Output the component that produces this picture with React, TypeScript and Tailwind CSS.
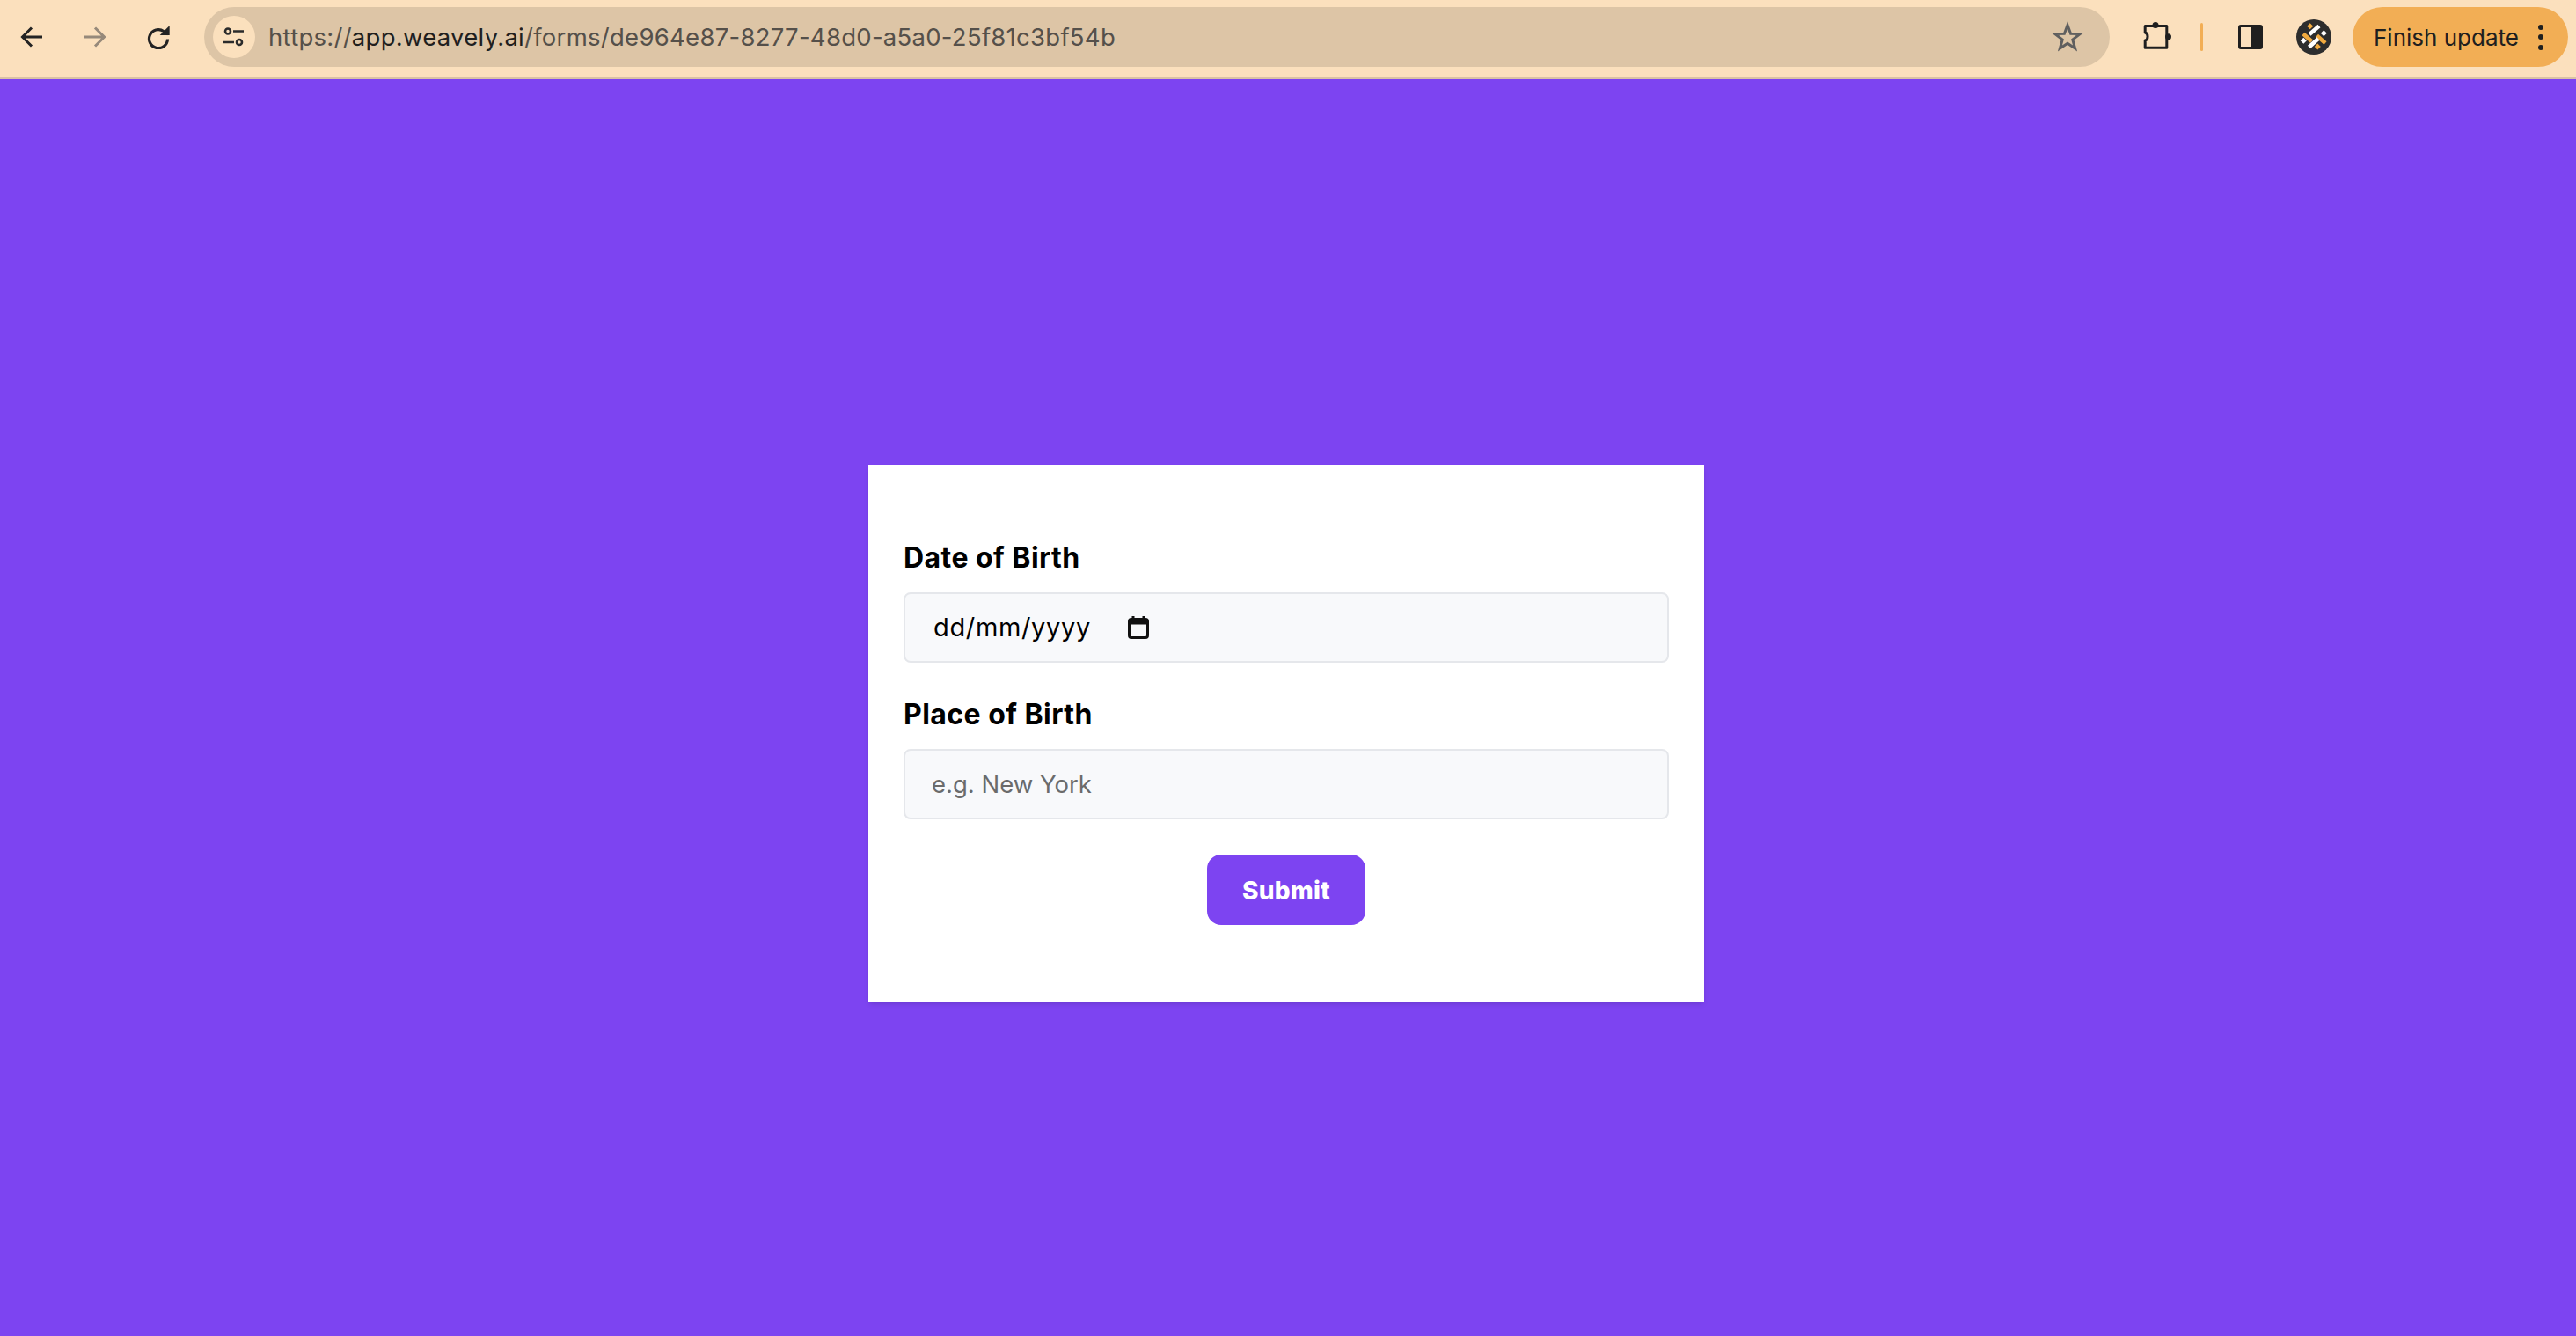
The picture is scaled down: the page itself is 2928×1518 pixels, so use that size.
import React from 'react';

const BrowserBar: React.FC = () => (
  <header className="flex h-[90px] items-center border-b-2 border-[#d9c2a5] bg-[#fbe0bd] pb-[4px] pr-[9px] text-[#1f1f1f]">
    <button className="flex h-[68px] w-[72px] items-center justify-center">
      <svg width="26" height="26" viewBox="0 0 26 26" fill="none" stroke="#232323" strokeWidth="3">
        <path d="M25 13H3M13 2.5 2.5 13 13 23.5" />
      </svg>
    </button>
    <button className="flex h-[68px] w-[72px] items-center justify-center">
      <svg width="26" height="26" viewBox="0 0 26 26" fill="none" stroke="#96897a" strokeWidth="3">
        <path d="M1 13h22M13 2.5 23.5 13 13 23.5" />
      </svg>
    </button>
    <button className="flex h-[68px] w-[72px] items-center justify-center">
      <svg width="28" height="28" viewBox="0 0 28 28" fill="none">
        <path d="M24.5 16.5A10.5 10.5 0 1 1 20 7.5L25 11" stroke="#232323" strokeWidth="3.2" />
        <path d="M26.7 1v11H15.7z" fill="#232323" />
      </svg>
    </button>
    <div className="ml-[16px] flex h-[68px] w-[2166px] items-center rounded-full bg-[#ddc5a6] pl-[10px] pr-[30px]">
      <div className="flex h-[48px] w-[48px] items-center justify-center rounded-full bg-[#fbe0bd]">
        <svg width="26" height="24" viewBox="0 0 26 24" fill="none" stroke="#2b2b2b" strokeWidth="2.6">
          <circle cx="6" cy="5.5" r="3" />
          <path d="M12 5.5h12M1 18h12" />
          <circle cx="19" cy="18" r="3" />
        </svg>
      </div>
      <div className="ml-[15px] flex-1 pt-[1px] font-['Inter',sans-serif] text-[27.5px] leading-none tracking-[0.27px] text-[#55504a]">
        https://<span className="text-[#1f1f1f]">app.weavely.ai</span>/forms/de964e87-8277-48d0-a5a0-25f81c3bf54b
      </div>
      <svg width="36" height="36" viewBox="0 0 36 36" fill="none" stroke="#5f5f5f" strokeWidth="3" strokeLinejoin="miter">
        <path d="M18 4.5 21.6 14.2 32 14.6 23.8 21 26.6 31 18 25.3 9.4 31 12.2 21 4 14.6 14.4 14.2Z" />
      </svg>
    </div>
    <button className="ml-[20px] flex h-[68px] w-[68px] items-center justify-center">
      <svg width="34" height="34" viewBox="0 0 34 34" fill="none">
        <path d="M3.2 4.5H27.8V29.2H3.2V21C7 20 7 13 3.2 12Z" stroke="#1f1f1f" strokeWidth="3" strokeLinejoin="round" />
        <circle cx="15" cy="3.5" r="3.5" fill="#1f1f1f" />
        <circle cx="29.5" cy="16.7" r="3.5" fill="#1f1f1f" />
      </svg>
    </button>
    <div className="ml-[15px] h-[32px] w-[3px] rounded-full bg-[#f2ae55]" />
    <button className="ml-[22px] flex h-[68px] w-[64px] items-center justify-center">
      <div className="flex h-[28px] w-[28px] overflow-hidden rounded-[3px] border-[3px] border-[#1f1f1f]">
        <div className="flex-1 bg-[#fbe0bd]" />
        <div className="w-[10px] bg-[#1f1f1f]" />
      </div>
    </button>
    <div className="ml-[20px] flex h-[68px] w-[40px] items-center justify-center">
      <svg width="40" height="40" viewBox="0 0 40 40">
        <circle cx="20" cy="20" r="20" fill="#2d2d2d" />
        <g strokeWidth="4.5">
          <path d="M8 16.5 17.5 25" stroke="#f2ab3f" />
          <path d="M23.5 18.5 33 27" stroke="#f2ab3f" />
          <path d="M15 17 26 7.5" stroke="#ffffff" />
          <path d="M14.5 31.5 25 22" stroke="#ffffff" />
        </g>
        <rect x="13.2" y="5.2" width="5" height="5" transform="rotate(45 15.7 7.7)" fill="#f2ab3f" />
        <rect x="21.8" y="28.5" width="5" height="5" transform="rotate(45 24.3 31)" fill="#f2ab3f" />
        <rect x="28.8" y="13.2" width="5" height="5" transform="rotate(45 31.3 15.7)" fill="#ffffff" />
        <rect x="5.8" y="21.8" width="5" height="5" transform="rotate(45 8.3 24.3)" fill="#ffffff" />
      </svg>
    </div>
    <button className="ml-[24px] flex h-[68px] w-[245px] items-center rounded-full bg-[#f2ae55] pl-[24px]">
      <span className="pt-[2px] font-['Inter',sans-serif] text-[26px] leading-none text-[#1f1f1f]">Finish update</span>
      <span className="ml-[22px] flex flex-col gap-[5.5px]">
        <span className="h-[6px] w-[6px] rounded-full bg-[#1f1f1f]" />
        <span className="h-[6px] w-[6px] rounded-full bg-[#1f1f1f]" />
        <span className="h-[6px] w-[6px] rounded-full bg-[#1f1f1f]" />
      </span>
    </button>
  </header>
);

const App: React.FC = () => {
  return (
    <div className="flex h-[1518px] flex-col overflow-hidden bg-[#7d44f1]">
      <BrowserBar />
      <main className="flex justify-center pr-[4px] pt-[438px]">
        <form className="flex h-[610px] w-[950px] flex-col bg-white px-[40px] pt-[84px] font-['Inter',sans-serif] shadow-md">
          <label className="text-[32px] font-bold leading-[44px] tracking-[0.45px] text-black">Date of Birth</label>
          <div className="mt-[17px] flex h-[80px] items-center rounded-[8px] border-2 border-[#e5e7eb] bg-[#f8f9fb] pl-[32px]">
            <span className="text-[29px] tracking-[0.65px] text-black">dd/mm/yyyy</span>
            <svg className="ml-[42px]" width="24" height="26" viewBox="0 0 24 26" fill="none">
              <path d="M6 0v4M18 0v4" stroke="#111" strokeWidth="3" />
              <rect x="1.5" y="3.5" width="21" height="21" rx="2.5" stroke="#111" strokeWidth="3" />
              <rect x="1.5" y="3.5" width="21" height="6" fill="#111" />
            </svg>
          </div>
          <label className="mt-[37px] text-[32px] font-bold leading-[44px] tracking-[0.45px] text-black">Place of Birth</label>
          <input
            className="mt-[17px] h-[80px] rounded-[8px] border-2 border-[#e5e7eb] bg-[#f8f9fb] pl-[30px] text-[27.5px] outline-none placeholder:text-[#6b6b6b]"
            placeholder="e.g. New York"
          />
          <button className="mx-auto mt-[40px] h-[80px] w-[180px] rounded-[16px] bg-[#7d44f1] pt-[2px] text-[28px] font-extrabold tracking-[0.2px] text-white">
            Submit
          </button>
        </form>
      </main>
    </div>
  );
};

export default App;
